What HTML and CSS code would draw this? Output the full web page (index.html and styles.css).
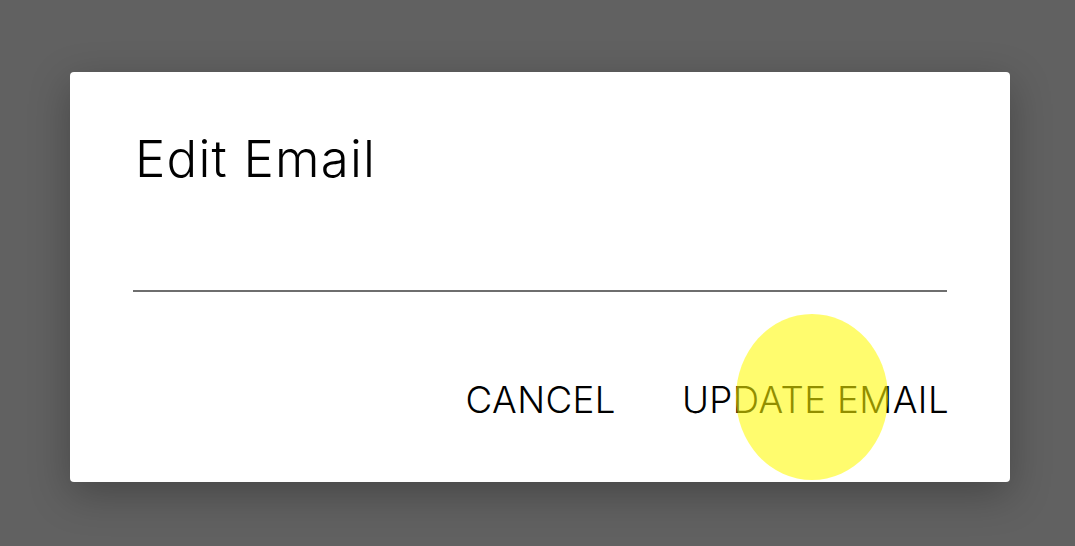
FILE: index.html
```html
<!DOCTYPE html>
<html>
<head>
<meta charset="utf-8">
<link rel="stylesheet" href="styles.css">
</head>
<body>
<div class="dialog">
  <h1 class="title">Edit Email</h1>
  <div class="field"></div>
  <div class="actions">
    <span class="btn">CANCEL</span>
    <span class="btn">UPDATE EMAIL</span>
  </div>
</div>
<div class="touch"></div>
</body>
</html>
```
FILE: styles.css
```css
html, body {
  margin: 0;
  padding: 0;
}
body {
  width: 1075px;
  height: 546px;
  background: #616161;
  font-family: Inter, "Liberation Sans", sans-serif;
  overflow: hidden;
  position: relative;
}
.dialog {
  margin: 72px 0 0 70px;
  width: 940px;
  height: 410px;
  box-sizing: border-box;
  background: #fff;
  border-radius: 4px;
  box-shadow: 0 12px 40px rgba(0,0,0,0.28);
  padding: 61px 63px 0 63px;
}
.title {
  margin: 0 0 0 2px;
  font-size: 51px;
  line-height: 51px;
  font-weight: 350;
  letter-spacing: 1.2px;
  color: #000;
}
.field {
  height: 106px;
  border-bottom: 2px solid #6e6e6e;
}
.actions {
  margin-top: 89px;
  margin-right: -2px;
  display: flex;
  justify-content: flex-end;
  gap: 66px;
}
.btn {
  font-size: 36.7px;
  line-height: 37px;
  font-weight: 350;
  letter-spacing: 0.4px;
  color: #000;
}
.touch {
  position: absolute;
  left: 736px;
  top: 314px;
  width: 152px;
  height: 166px;
  border-radius: 50%;
  background: rgba(255, 250, 0, 0.57);
}
```
